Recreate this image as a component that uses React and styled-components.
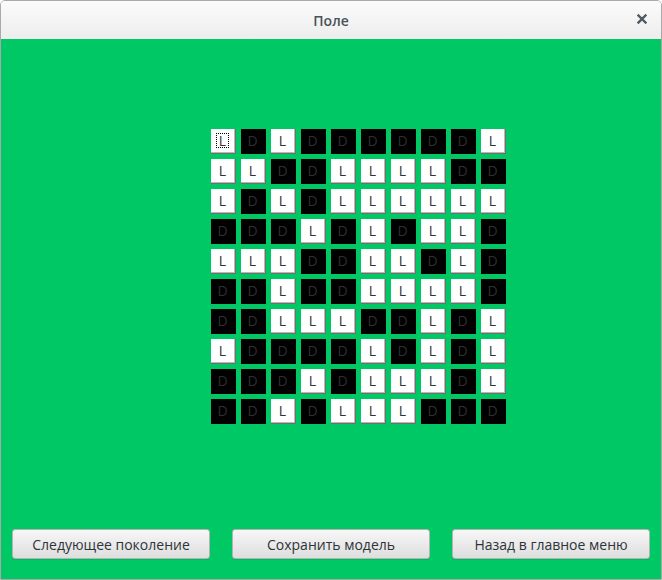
import React from "react";
import styled, { createGlobalStyle } from "styled-components";

const Global = createGlobalStyle`
  html, body { margin: 0; padding: 0; background: #ffffff; }
  body { font-family: "Open Sans", "DejaVu Sans", sans-serif; }
`;

const Window = styled.div`
  width: 662px;
  height: 580px;
  box-sizing: border-box;
  border: 1px solid #a9a9a9;
  border-radius: 5px 5px 0 0;
  display: flex;
  flex-direction: column;
  overflow: hidden;
`;

const TitleBar = styled.div`
  height: 38px;
  flex: 0 0 38px;
  background: linear-gradient(#fbfbfb, #ededed);
  display: flex;
  align-items: center;
  justify-content: center;
  position: relative;
`;

const Title = styled.span`
  font-family: "Open Sans", "DejaVu Sans", sans-serif;
  font-size: 14px;
  font-weight: 600;
  color: #4a5258;
`;

const Close = styled.span`
  position: absolute;
  right: 14px;
  top: 13px;
  width: 10px;
  height: 10px;
  display: flex;
`;

const Body = styled.div`
  flex: 1;
  background: #00c865;
  display: flex;
  flex-direction: column;
  padding: 90px 11px 20px;
`;

const Board = styled.div`
  display: grid;
  grid-template-columns: repeat(10, 25px);
  grid-auto-rows: 25px;
  gap: 5px;
  margin-left: 199px;
`;

const Cell = styled.div`
  box-sizing: border-box;
  display: flex;
  align-items: center;
  justify-content: center;
  font-family: "Open Sans", "DejaVu Sans", sans-serif;
  font-size: 14px;
  padding: 0 2px 2px 0;
  background: ${(p) => (p.$live ? "#ffffff" : "#000000")};
  color: ${(p) => (p.$live ? "#2e3436" : "#2f2f2f")};
  box-shadow: ${(p) =>
    p.$live ? "inset -1px -1px 0 #6f6f6f, inset -2px -2px 0 #b8b8b8" : "none"};
`;

const Focus = styled.span`
  display: flex;
  align-items: center;
  justify-content: center;
  width: 11px;
  height: 13px;
  border: 1px dotted #000;
  line-height: 1;
`;

const Spacer = styled.div`
  flex: 1;
`;

const Buttons = styled.div`
  display: flex;
  gap: 22px;
`;

const Button = styled.button`
  width: 198px;
  height: 30px;
  box-sizing: border-box;
  border: 1px solid #b4b4b4;
  border-radius: 3px;
  background: linear-gradient(#f7f7f7, #dedede);
  font-family: "Open Sans", "DejaVu Sans", sans-serif;
  font-size: 14px;
  color: #2e3436;
  padding: 0;
  box-shadow: 0 1px 0 rgba(0, 0, 0, 0.08);
`;

const rows = [
  "LDLDDDDDDL",
  "LLDDLLLLDD",
  "LDLDLLLLLL",
  "DDDLDLDLLD",
  "LLLDDLLDLD",
  "DDLDDLLLLD",
  "DDLLLDDLDL",
  "LDDDDLDLDL",
  "DDDLDLLLDL",
  "DDLDLLLDDD",
];

export default function App() {
  return (
    <>
      <Global />
      <Window>
        <TitleBar>
          <Title>Поле</Title>
          <Close>
            <svg width="10" height="10" viewBox="0 0 10 10">
              <path d="M1.5 1.5 L8.5 8.5 M8.5 1.5 L1.5 8.5" stroke="#4d5963" strokeWidth="2.4" strokeLinecap="square" />
            </svg>
          </Close>
        </TitleBar>
        <Body>
          <Board>
            {rows.map((r, ri) =>
              r.split("").map((c, ci) => (
                <Cell key={ri + "-" + ci} $live={c === "L"}>
                  {ri === 0 && ci === 0 ? <Focus>{c}</Focus> : c}
                </Cell>
              ))
            )}
          </Board>
          <Spacer />
          <Buttons>
            <Button>Следующее поколение</Button>
            <Button>Сохранить модель</Button>
            <Button>Назад в главное меню</Button>
          </Buttons>
        </Body>
      </Window>
    </>
  );
}
